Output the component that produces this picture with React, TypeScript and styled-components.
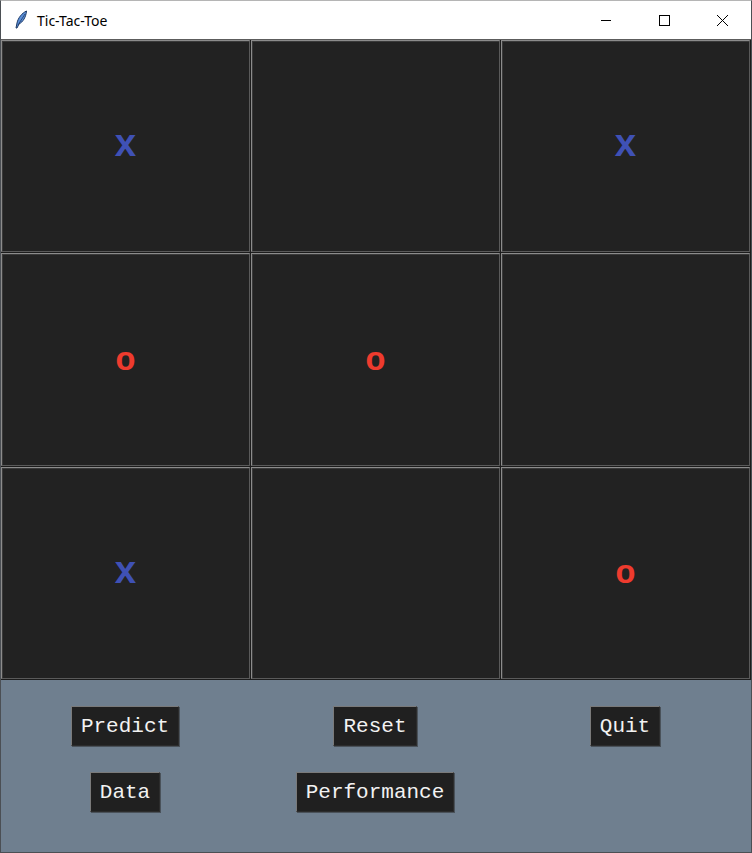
import styled, { createGlobalStyle } from "styled-components";

const Global = createGlobalStyle`
  html, body { margin: 0; padding: 0; background: #ffffff; }
  body { font-family: "Liberation Sans", Arial, sans-serif; }
`;

const Window = styled.div`
  width: 752px;
  height: 853px;
  box-sizing: border-box;
  border: 1px solid #4b4f54;
  border-top-color: #b5b5b5;
  display: flex;
  flex-direction: column;
  background: #ffffff;
`;

const TitleBar = styled.div`
  height: 38px;
  flex-shrink: 0;
  display: flex;
  align-items: center;
  background: #ffffff;
  border-bottom: 1px solid #5c5c5c;
  padding-left: 13px;
  gap: 9px;
`;

const Title = styled.span`
  font-family: "Segoe UI", "Noto Sans", "Liberation Sans", sans-serif;
  font-size: 14px;
  color: #000;
  flex: 1;
`;

const Controls = styled.div`
  display: flex;
  height: 100%;
`;

const Ctrl = styled.div`
  width: 58px;
  height: 100%;
  display: flex;
  align-items: center;
  justify-content: center;
`;

const Board = styled.div`
  display: grid;
  grid-template-columns: repeat(3, 250px);
  grid-template-rows: 213px 214px 213px;
  background: #1c1c1c;
`;

const Cell = styled.div`
  box-sizing: border-box;
  background: #222222;
  border: 1px solid #8c8c8c;
  border-right-color: #5a5a5a;
  border-bottom-color: #5a5a5a;
  box-shadow: inset 1px 1px 0 #3a3a3a;
  margin: 0 1px 1px 0;
  display: flex;
  align-items: center;
  justify-content: center;
`;

const Mark = styled.span<{ $o: boolean }>`
  font-family: "Liberation Mono", "Courier New", monospace;
  font-weight: bold;
  font-size: ${(p) => (p.$o ? "34px" : "38px")};
  line-height: 1;
  color: ${(p) => (p.$o ? "#ee3b2e" : "#3f51b5")};
  transform: translateY(${(p) => (p.$o ? "1px" : "0px")});
`;

const Panel = styled.div`
  flex: 1;
  background: #6f7f8f;
  display: grid;
  grid-template-columns: repeat(3, 250px);
  grid-template-rows: 40px 40px;
  row-gap: 26px;
  padding-top: 26px;
  align-content: start;
  justify-items: center;
`;

const Btn = styled.button`
  font-family: "Liberation Mono", "Courier New", monospace;
  font-weight: normal;
  font-size: 21px;
  color: #f2f2f2;
  background: #202020;
  height: 40px;
  padding: 0 9px;
  margin-right: 2px;
  box-sizing: border-box;
  border: 1px solid;
  border-color: #7a7a7a #2c2c2c #2c2c2c #7a7a7a;
  box-shadow: 1px 1px 0 #4a525a;
  cursor: pointer;
`;

const board = ["x", "", "x", "o", "o", "", "x", "", "o"];

export default function App() {
  return (
    <>
      <Global />
      <Window>
        <TitleBar>
          <svg width="14" height="20" viewBox="0 0 14 20">
            <path d="M12.5 1 C8 3 4 8 3 13 L2 18 L3 18 L5 14 C9 12 12 7 12.5 1 Z" fill="#5b8fd9" stroke="#1d3a66" strokeWidth="1" />
            <path d="M11 4 L4 15" stroke="#1d3a66" strokeWidth="0.8" />
          </svg>
          <Title>Tic-Tac-Toe</Title>
          <Controls>
            <Ctrl>
              <svg width="12" height="12" viewBox="0 0 12 12"><path d="M1 6.5 H11" stroke="#000" strokeWidth="1" /></svg>
            </Ctrl>
            <Ctrl>
              <svg width="12" height="12" viewBox="0 0 12 12"><rect x="1.5" y="1.5" width="10" height="10" fill="none" stroke="#000" strokeWidth="1" /></svg>
            </Ctrl>
            <Ctrl>
              <svg width="13" height="13" viewBox="0 0 13 13"><path d="M1 1 L12 12 M12 1 L1 12" stroke="#000" strokeWidth="1" /></svg>
            </Ctrl>
          </Controls>
        </TitleBar>
        <Board>
          {board.map((v, i) => (
            <Cell key={i}>{v && <Mark $o={v === "o"}>{v}</Mark>}</Cell>
          ))}
        </Board>
        <Panel>
          <Btn>Predict</Btn>
          <Btn>Reset</Btn>
          <Btn>Quit</Btn>
          <Btn>Data</Btn>
          <Btn>Performance</Btn>
        </Panel>
      </Window>
    </>
  );
}
